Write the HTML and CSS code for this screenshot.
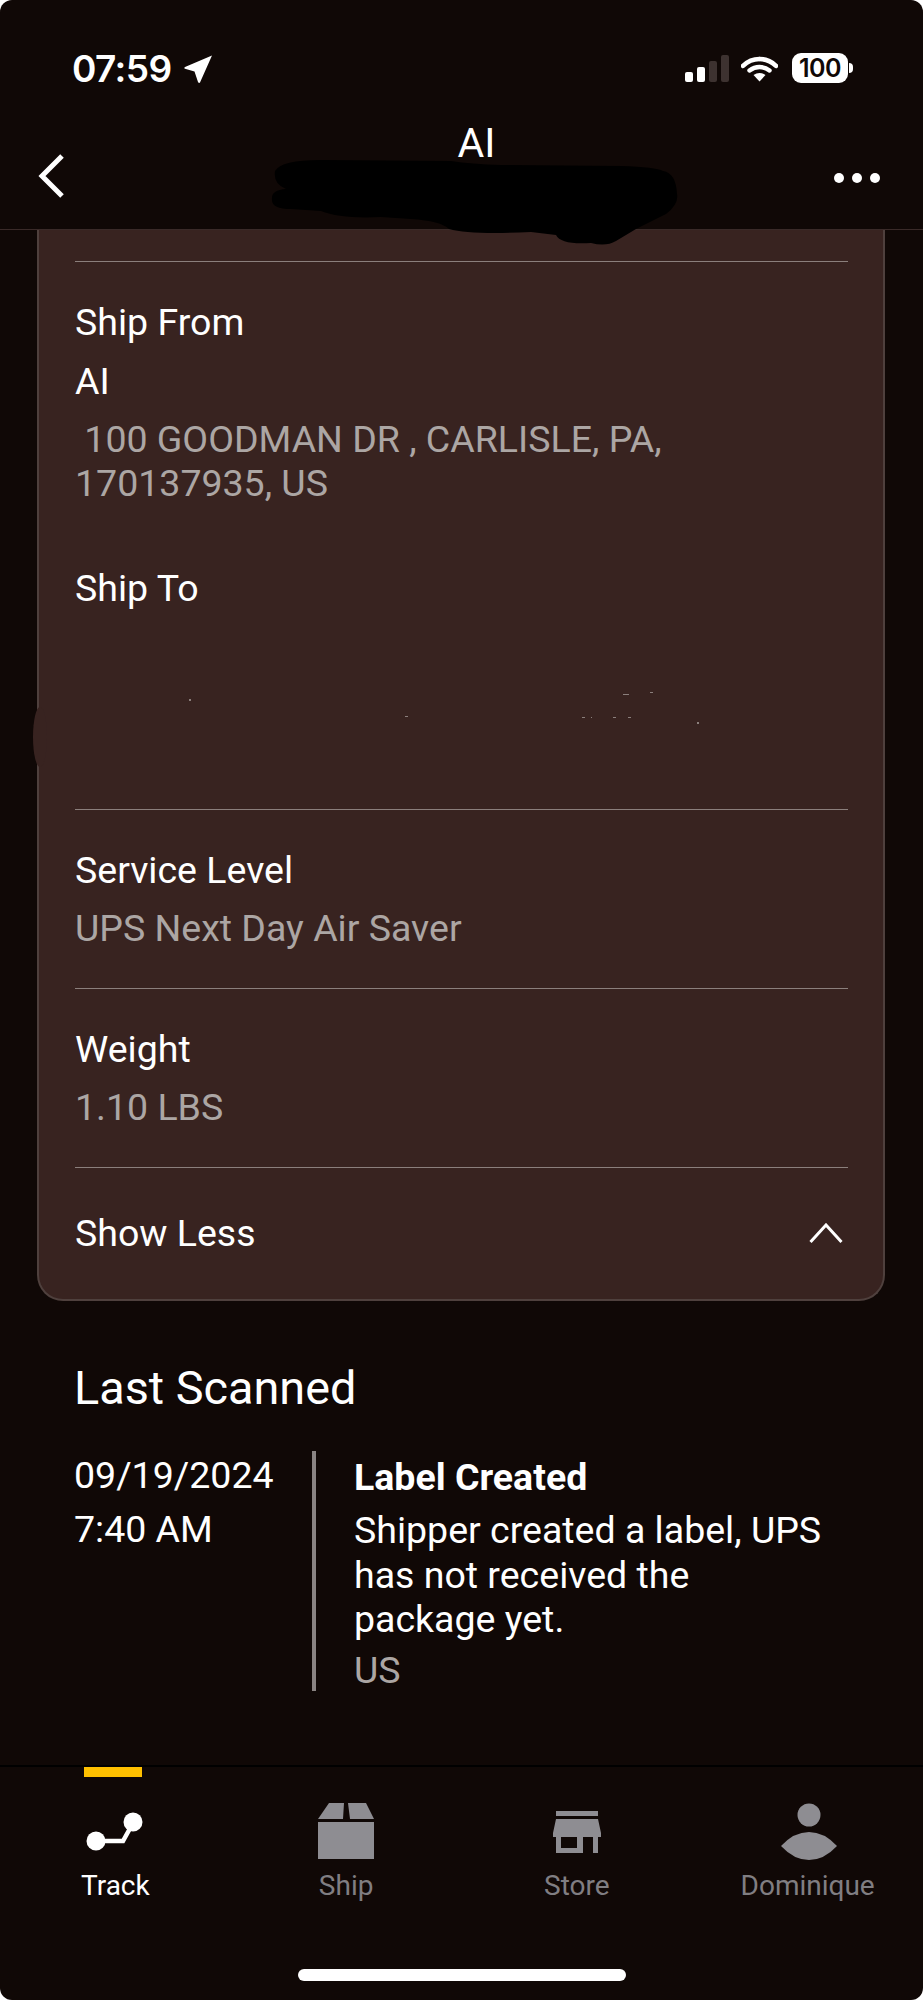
FILE: index.html
```html
<!DOCTYPE html>
<html lang="en">
<head>
<meta charset="utf-8">
<title>Tracking details</title>
<link rel="stylesheet" href="styles.css">
</head>
<body>
<div class="screen">
  <header class="top">
    <div class="status">
      <div class="clock">
        <span class="time">07:59</span>
        <svg class="loc" viewBox="0 0 28 28"><path d="M28 .5 L16 27.5 Q15 28.5 14 27 L10.5 16.5 L1 13.8 Q-.3 13 1 12 Z" fill="#fff"/></svg>
      </div>
      <div class="indicators">
        <div class="signal">
          <i class="bar b1"></i><i class="bar b2"></i><i class="bar b3"></i><i class="bar b4"></i>
        </div>
        <svg class="wifi" viewBox="0 0 37 26"><path d="M18.5 3 C12 3 6.5 5.5 2 9.8" fill="none" stroke="#fff" stroke-width="4.6" stroke-linecap="round"/><path d="M18.5 3 C25 3 30.5 5.5 35 9.8" fill="none" stroke="#fff" stroke-width="4.6" stroke-linecap="round"/><path d="M8.5 14.5 C14.5 9.8 22.5 9.8 28.5 14.5" fill="none" stroke="#fff" stroke-width="4.4" stroke-linecap="round"/><path d="M12.5 19 Q18.5 14.8 24.5 19 L18.5 25.5 Z" fill="#fff"/></svg>
        <div class="battery"><span class="level">100</span><i class="tip"></i></div>
      </div>
    </div>
    <div class="nav">
      <svg class="back" viewBox="0 0 28 46"><path d="M25 3 L5 23 L25 43" fill="none" stroke="#fff" stroke-width="5"/></svg>
      <div class="title">AI</div>
      <div class="more"><i></i><i></i><i></i></div>
    </div>
    <svg class="scribble" viewBox="0 0 410 90"><path d="M4 12 Q10 1 50 1 L180 2 Q200 5 230 6 L350 7 Q385 8 392 12 Q405 14 406 35 Q408 45 395 55 L365 70 L345 82 Q335 88 320 84 Q290 86 285 76 L260 73 Q200 76 178 70 Q170 62 140 60 L110 58 Q70 60 50 52 L20 50 Q0 50 1 40 Q0 31 15 30 Q2 25 4 12 Z" fill="#000"/></svg>
  </header>

  <main class="content">
    <section class="card">
      <div class="group first">
        <div class="label">Ship From</div>
        <div class="label second">AI</div>
        <div class="value address">&nbsp;100 GOODMAN DR , CARLISLE, PA, 170137935, US</div>
        <div class="label shipto">Ship To</div>
      </div>
      <div class="group compact">
        <div class="label">Service Level</div>
        <div class="value">UPS Next Day Air Saver</div>
      </div>
      <div class="group compact">
        <div class="label">Weight</div>
        <div class="value">1.10 LBS</div>
      </div>
      <div class="toggle">
        <span class="label">Show Less</span>
        <svg class="chev" viewBox="0 0 34 20"><path d="M1.5 19 L17 2 L32.5 19" fill="none" stroke="#fff" stroke-width="3"/></svg>
      </div>
      <i class="smudge"></i>
      <svg class="specks" viewBox="0 0 700 60"><path d="M150 29h2v2h-2z M366 46h3v1h-3z M543 47h3v1h-3z M552 47h1v1h-1z M574 47h3v1h-3z M589 47h3v1h-3z M584 24h6v1h-6z M611 22h3v1h-3z M658 52h2v2h-2z" fill="#8b7f7c"/></svg>
    </section>

    <section class="scan">
      <h2 class="heading">Last Scanned</h2>
      <div class="event">
        <div class="when">
          <div>09/19/2024</div>
          <div>7:40 AM</div>
        </div>
        <div class="what">
          <div class="status-title">Label Created</div>
          <div class="desc">Shipper created a label, UPS has not received the package yet.</div>
          <div class="country">US</div>
        </div>
      </div>
    </section>
  </main>

  <nav class="tabs">
    <div class="tab active">
      <i class="marker"></i>
      <svg class="ticon" viewBox="0 0 58 58"><circle cx="10" cy="38" r="9.5" fill="#fff"/><circle cx="47" cy="19" r="9.5" fill="#fff"/><path d="M14 38 H37 L47 20" fill="none" stroke="#fff" stroke-width="4.5"/></svg>
      <span>Track</span>
    </div>
    <div class="tab">
      <svg class="ticon" viewBox="0 0 58 58"><path d="M12 0 H27 L26 16 H1 Z M31 0 H49 L57 16 H33 Z M1 19 H57 V56 H1 Z" fill="#8e8d92"/></svg>
      <span>Ship</span>
    </div>
    <div class="tab">
      <svg class="ticon" viewBox="0 0 58 58"><path d="M8 8H50V13H8Z M8 16H50L53 30V34H50V50H45V34H35V50H8V34H5V30Z M13 34V45H29V34Z" fill="#8e8d92" fill-rule="evenodd"/></svg>
      <span>Store</span>
    </div>
    <div class="tab">
      <svg class="ticon" viewBox="0 0 58 58"><circle cx="30" cy="12" r="11.5" fill="#8e8d92"/><path d="M2 43 Q15 29 30 29 Q45 29 58 43 Q45 57 30 57 Q15 57 2 43 Z" fill="#8e8d92"/></svg>
      <span>Dominique</span>
    </div>
    <i class="home"></i>
  </nav>
</div>
</body>
</html>
```
FILE: styles.css
```css
* { box-sizing: border-box; }
html, body { margin: 0; padding: 0; background: #fff; }
body { font-family: Roboto, "Liberation Sans", sans-serif; color: #fff; }
i { display: block; }

.screen {
  width: 923px;
  height: 2000px;
  background: #100806;
  border-radius: 12px;
  overflow: hidden;
  display: flex;
  flex-direction: column;
}

.top {
  position: relative;
  height: 230px;
  flex: none;
  border-bottom: 1px solid #3a2a28;
}
.status {
  display: flex;
  justify-content: space-between;
  padding: 50px 75px 0 72px;
  height: 92px;
}
.clock { display: flex; align-items: flex-start; gap: 12px; }
.time { font-family: Inter, Roboto, sans-serif; font-weight: 600; font-size: 37px; line-height: 38px; letter-spacing: -0.6px; }
.loc { width: 28px; height: 28px; margin-top: 5px; }
.indicators { display: flex; align-items: flex-start; }
.signal { display: flex; align-items: flex-end; gap: 4px; height: 27px; margin-top: 5px; }
.bar { width: 8px; border-radius: 2px; background: #fff; }
.b1 { height: 10px; }
.b2 { height: 15px; }
.b3 { height: 21px; background: #3d3230; }
.b4 { height: 27px; background: #3d3230; }
.wifi { width: 37px; height: 26px; margin: 6px 14px 0 12px; }
.battery {
  position: relative;
  width: 56px;
  height: 30px;
  margin-top: 3px;
  border-radius: 9px;
  background: #fff;
  color: #100806;
  text-align: center;
}
.level { font-family: Inter, Roboto, sans-serif; font-size: 25px; font-weight: 600; line-height: 30px; letter-spacing: -0.5px; }
.tip { position: absolute; right: -5px; top: 10px; width: 4px; height: 10px; border-radius: 0 4px 4px 0; background: #fff; }

.nav {
  display: flex;
  justify-content: space-between;
  align-items: flex-start;
  padding: 28px 43px 0 37px;
}
.back { width: 28px; height: 46px; margin-top: 33px; }
.title { font-size: 41px; line-height: 46px; font-weight: 400; margin-left: 54px; }
.more { display: flex; gap: 8px; margin-top: 53px; }
.more i { width: 10px; height: 10px; border-radius: 50%; background: #fff; }
.scribble { position: absolute; left: 271px; top: 159px; width: 410px; height: 90px; z-index: 2; }

.content { flex: 1; overflow: hidden; padding: 0 37px; }

.card {
  position: relative;
  width: 848px;
  height: 1071px;
  padding: 31px 35px 0 36px;
  background: #382320;
  border: 2px solid #4f403d;
  border-top: 0;
  border-radius: 0 0 26px 26px;
}
.group { border-top: 1px solid #8b7f7c; }
.first { height: 548px; padding-top: 38px; }
.compact { height: 179px; padding-top: 38px; }
.label { font-size: 37.5px; line-height: 44px; color: #fff; }
.label.second { margin-top: 15px; }
.value { font-size: 37.5px; line-height: 44px; color: #aca6a4; margin-top: 14px; }
.shipto { margin-top: 61px; }
.toggle {
  border-top: 1px solid #8b7f7c;
  display: flex;
  justify-content: space-between;
  align-items: center;
  height: 130px;
}
.chev { width: 34px; height: 20px; margin-right: 5px; }
.smudge { position: absolute; left: -6px; top: 477px; width: 14px; height: 60px; border-radius: 50%; background: #382320; }
.specks { position: absolute; left: 0; top: 440px; width: 700px; height: 60px; }

.scan { padding: 0 37px; }
.heading { font-size: 46.8px; line-height: 52px; font-weight: 400; margin: 61px 0 37px; }
.event { display: flex; align-items: stretch; }
.when { width: 238px; flex: none; font-size: 37.5px; line-height: 54px; margin-top: -3px; }
.what { border-left: 4px solid #8a8483; padding: 0 0 0 38px; width: 520px; height: 240px; }
.status-title { font-size: 37.5px; line-height: 44px; font-weight: 700; padding-top: 4px; }
.desc { font-size: 37.5px; line-height: 44.5px; margin-top: 9px; width: 475px; }
.country { font-size: 37.5px; line-height: 44px; color: #aca6a4; margin-top: 6px; }

.tabs {
  position: relative;
  flex: none;
  height: 235px;
  display: flex;
  border-top: 2px solid #000;
  align-items: flex-start;
}
.tab { flex: 1; position: relative; height: 118px; padding-top: 36px; display: flex; flex-direction: column; align-items: center; font-size: 28px; color: #807e82; }
.tab span { position: absolute; top: 103px; line-height: 32px; }
.tab.active { color: #fff; }
.ticon { width: 58px; height: 58px; }
.marker { position: absolute; left: 84px; top: 0; width: 58px; height: 10px; background: #ffc000; }
.home { position: absolute; left: 298px; top: 202px; width: 328px; height: 12px; border-radius: 6px; background: #fff; }
```
